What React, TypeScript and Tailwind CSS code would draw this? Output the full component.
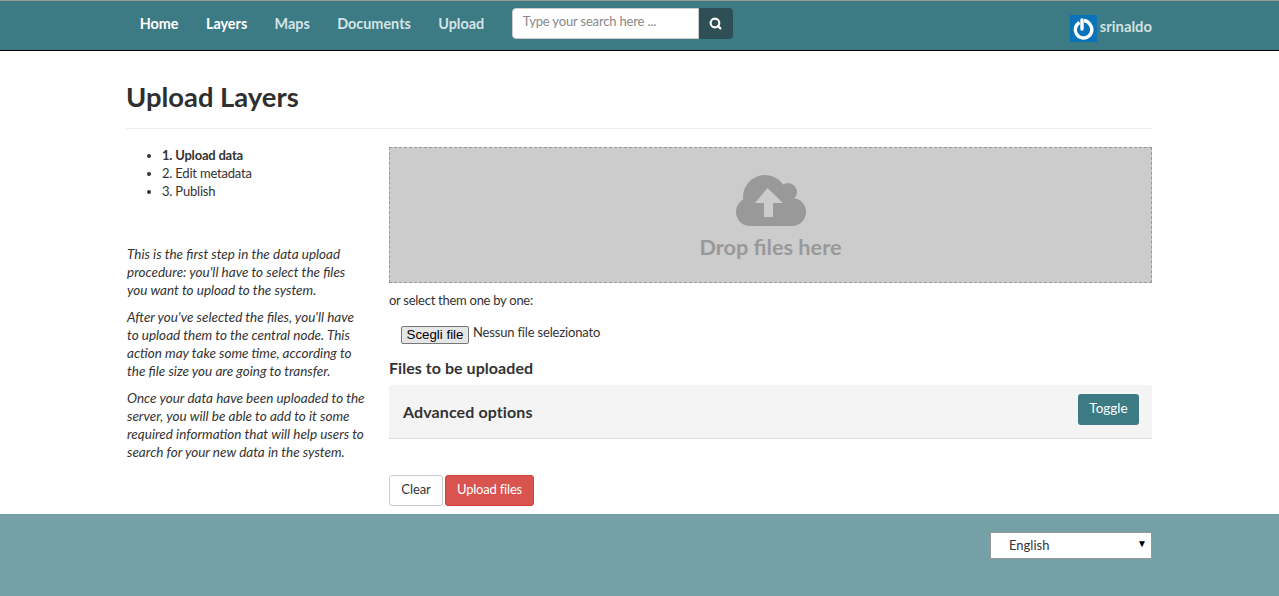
import { Search } from "lucide-react";

const nav = [
  { label: "Home", active: true },
  { label: "Layers", active: true },
  { label: "Maps", active: false },
  { label: "Documents", active: false },
  { label: "Upload", active: false },
];

export default function App() {
  return (
    <div className="flex h-[596px] w-full flex-col overflow-hidden bg-white font-['Lato','Noto_Sans',sans-serif] text-[14px] text-[#333]">
      <header className="h-[51px] shrink-0 border-t border-b border-t-[#999] border-b-black bg-[#3c7a84]">
        <div className="ml-[126px] flex h-full w-[1026px] items-start">
          <nav className="flex pt-[14px]">
            {nav.map((n) => (
              <a
                key={n.label}
                className={`px-[13.7px] text-[14.4px] leading-[18px] font-bold ${n.active ? "text-white" : "text-[#d4e4e7]"}`}
              >
                {n.label}
              </a>
            ))}
          </nav>
          <div className="ml-[14px] mt-[7px] flex h-[31px]">
            <div className="flex w-[187px] items-center rounded-l-[4px] border border-[#ccc] bg-white px-[10px] pb-[3px] text-[13px] tracking-[-0.17px] text-[#888]">
              Type your search here ...
            </div>
            <div className="flex w-[34px] items-center justify-center rounded-r-[4px] bg-[#2f4f56] text-white">
              <Search size={13} strokeWidth={4} />
            </div>
          </div>
          <div className="ml-auto mt-[14px] flex items-start">
            <svg width="27" height="27" viewBox="0 0 27 27" className="block">
              <rect width="27" height="27" fill="#0a72b8" />
              <path d="M9.5 7.5 A8.3 8.3 0 1 0 20 9.5 A8.3 8.3 0 0 0 14 5.5" fill="none" stroke="#fff" strokeWidth="3.4" />
              <path d="M12 5 V14" stroke="#fff" strokeWidth="3.4" strokeLinecap="round" />
            </svg>
            <span className="ml-[3px] mt-[3px] text-[14.8px] leading-[17px] font-bold text-[#cfe0e3]">srinaldo</span>
          </div>
        </div>
      </header>

      <main className="ml-[126px] w-[1026px] flex-1">
        <div className="h-[78px] border-b border-[#eee] pt-[29px]">
          <h1 className="text-[27.4px] leading-[34px] font-bold text-[#2f2f2f]">Upload Layers</h1>
        </div>
        <div className="flex pt-[18px]">
          <aside className="-mt-px w-[263px] shrink-0 pr-[24px] text-[13.5px] leading-[18px] text-[#333]">
            <ul className="list-disc pl-[36px] text-[13px] tracking-[-0.2px]">
              <li className="font-bold">1. Upload data</li>
              <li>2. Edit metadata</li>
              <li>3. Publish</li>
            </ul>
            <div className="mt-[45px] flex flex-col gap-[9px] pl-px italic">
              <p>This is the first step in the data upload procedure: you'll have to select the files you want to upload to the system.</p>
              <p>After you've selected the files, you'll have to upload them to the central node. This action may take some time, according to the file size you are going to transfer.</p>
              <p>Once your data have been uploaded to the server, you will be able to add to it some required information that will help users to search for your new data in the system.</p>
            </div>
          </aside>
          <section className="flex-1">
            <div className="flex h-[136px] flex-col items-center border border-dashed border-[#999] bg-[#ccc] pt-[27px] text-[#999]">
              <svg width="70" height="51" viewBox="0 0 70 51" className="block">
                <g fill="#999">
                  <circle cx="29" cy="22" r="22" />
                  <circle cx="52" cy="17" r="9" />
                  <rect x="0" y="23" width="70" height="28" rx="14" />
                </g>
                <path d="M31.5 13 L47 28 H37 V42 H28 V28 H19 Z" fill="#ccc" />
              </svg>
              <div className="mt-[6px] text-[21.7px] leading-[30px] font-bold">Drop files here</div>
            </div>
            <p className="mt-[8px] text-[13px] leading-[18px] tracking-[-0.27px]">or select them one by one:</p>
            <div className="mt-[17px] flex items-start pl-[12px]">
              <button className="h-[18px] w-[68px] rounded-[2px] border border-[#777] bg-[#e6e6e6] font-['Liberation_Sans',sans-serif] text-[13.3px] leading-[16px] text-black">
                Scegli file
              </button>
              <span className="ml-[4px] text-[13px] leading-[13px] tracking-[-0.17px]">Nessun file selezionato</span>
            </div>
            <h3 className="mt-[14px] text-[16px] leading-[20px] font-bold tracking-[0.05px]">Files to be uploaded</h3>
            <div className="mt-[7px] flex h-[54px] items-start justify-between rounded-t-[3px] border-b border-[#ddd] bg-[#f4f4f4] px-[13px] pt-[9px]">
              <h3 className="mt-[8px] pl-px text-[16px] leading-[20px] font-bold tracking-[0.1px]">Advanced options</h3>
              <button className="h-[31px] w-[61px] rounded-[3px] bg-[#3c7a84] pb-[3px] text-[13.5px] text-white">Toggle</button>
            </div>
            <div className="mt-[36px] flex gap-[2px]">
              <button className="h-[31px] w-[54px] rounded-[3px] border border-[#ccc] bg-white pb-[2px] text-[13px] tracking-[-0.1px]">Clear</button>
              <button className="h-[31px] w-[89px] rounded-[3px] border border-[#d43f3a] bg-[#d9534f] pb-[2px] text-[13px] tracking-[-0.2px] text-white">Upload files</button>
            </div>
          </section>
        </div>
      </main>

      <footer className="h-[82px] shrink-0 bg-[#75a0a8] pt-[18px]">
        <div className="ml-[126px] flex w-[1026px] justify-end">
          <div className="relative h-[27px] w-[162px] border border-[#999] bg-white pl-[18px] text-[13px] leading-[24px]">
            English
            <span className="absolute right-[4px] top-[-2px] text-[10px] text-black">▼</span>
          </div>
        </div>
      </footer>
    </div>
  );
}
